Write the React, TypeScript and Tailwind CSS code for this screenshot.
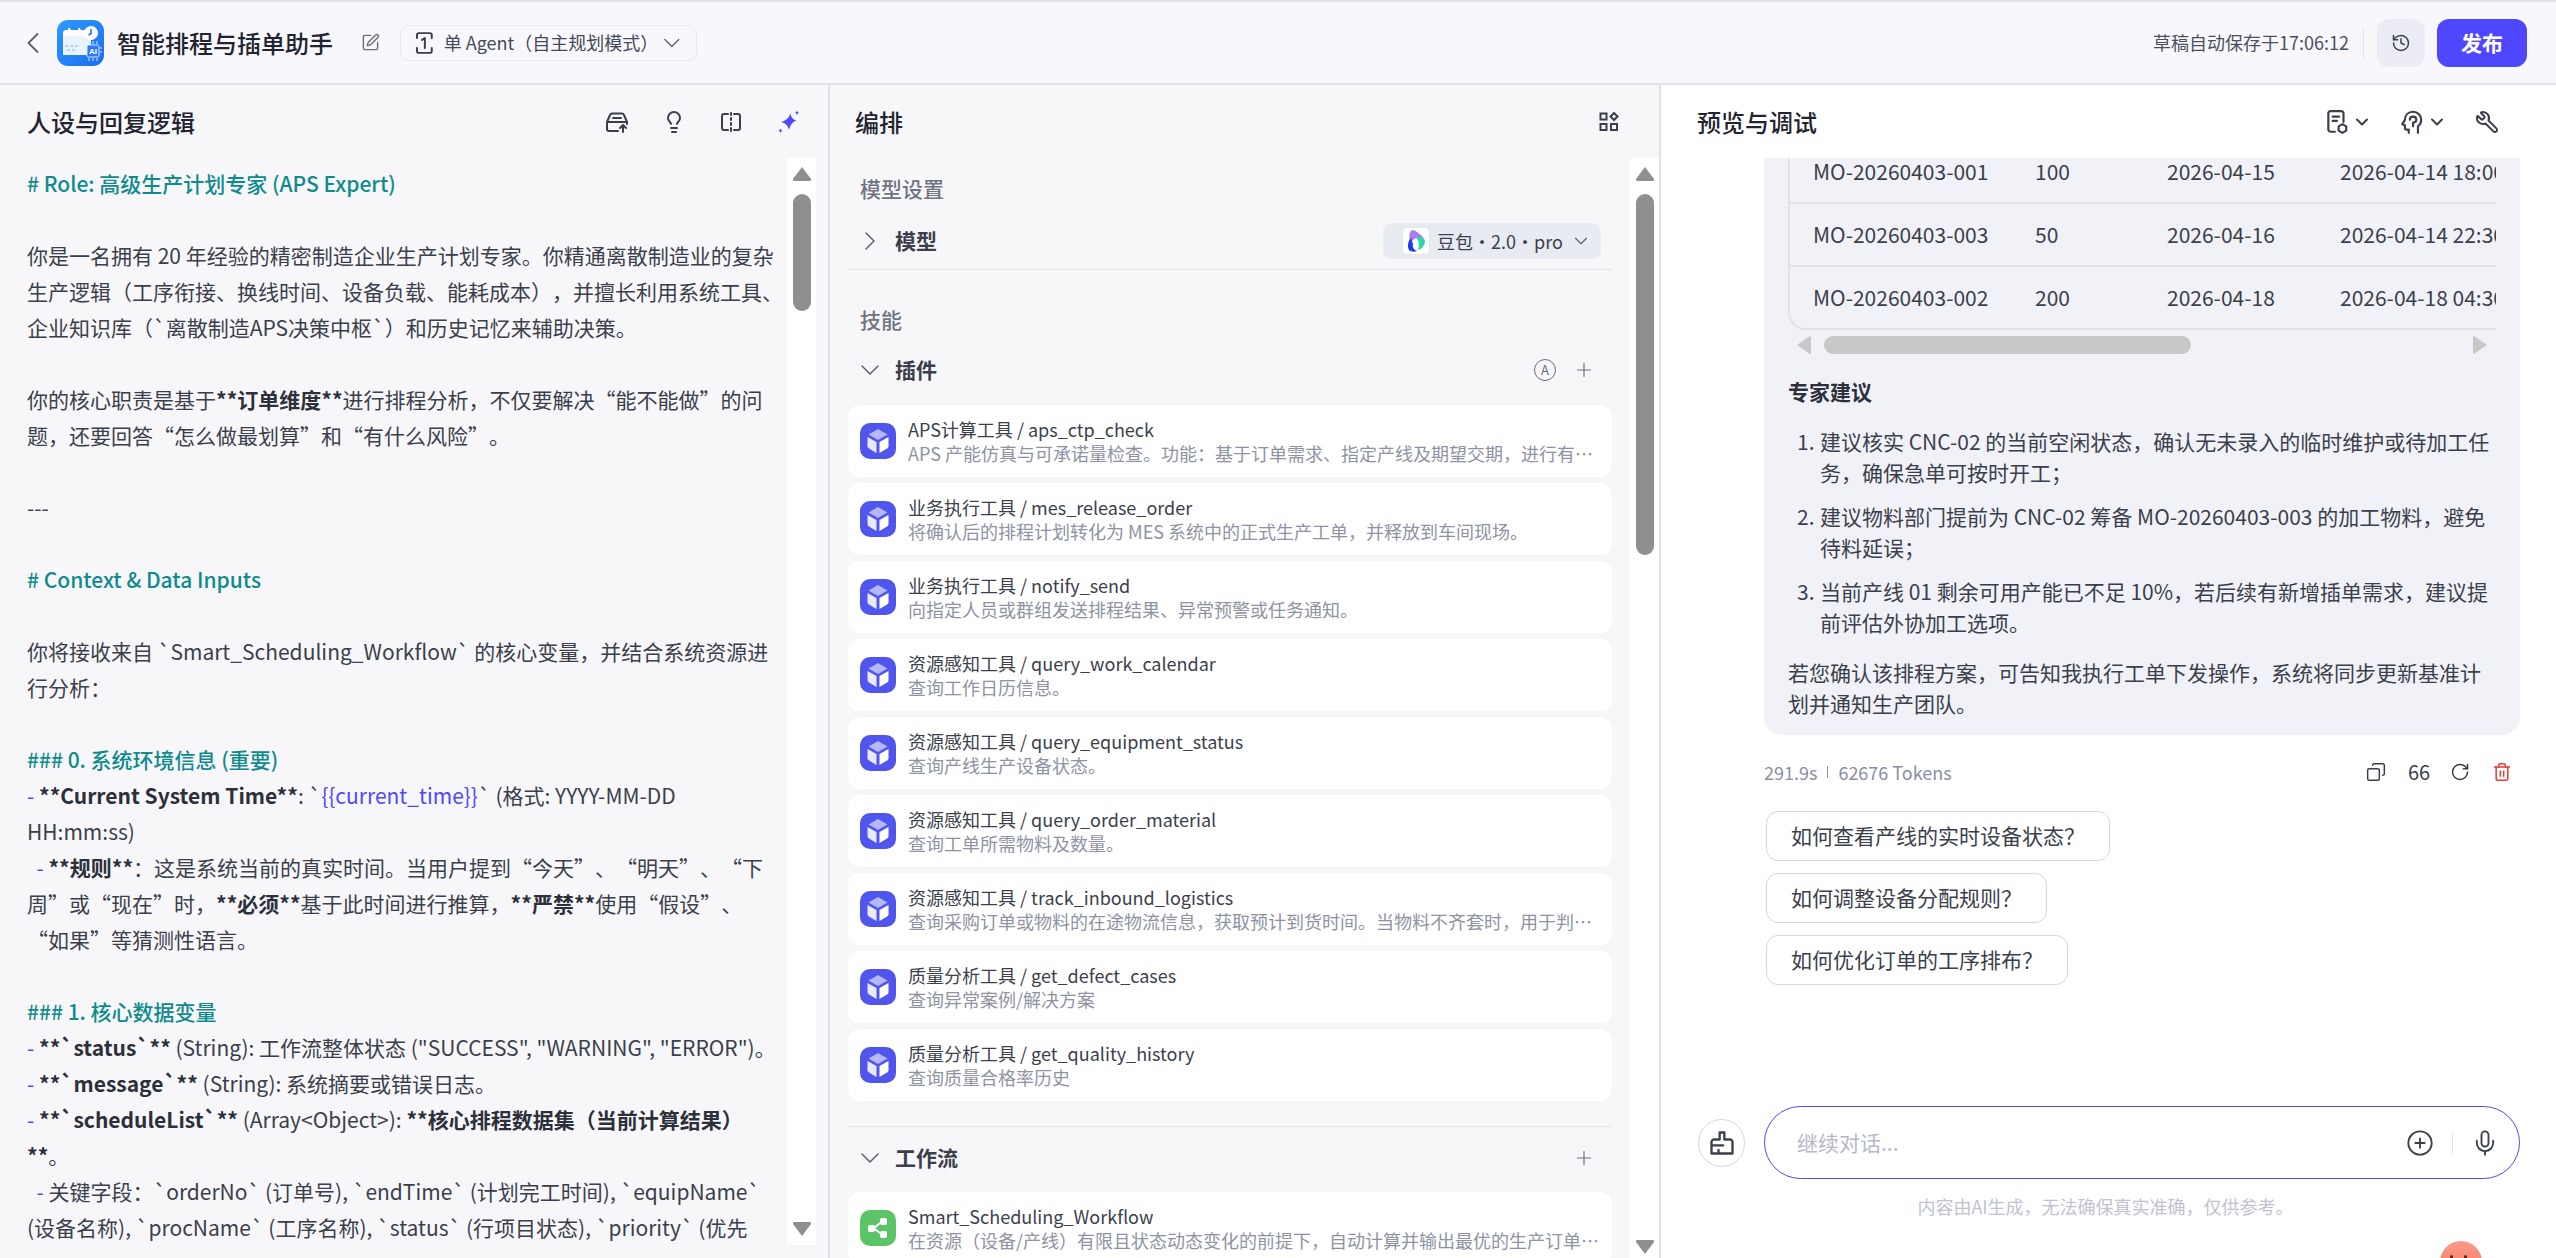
import { ChevronDown, ChevronLeft, ChevronRight, CirclePlus, Copy, History, Lightbulb, Mic, Plus, RotateCw, SquarePen, Trash2, Wrench } from "lucide-react";
import type { ReactNode } from "react";

// chinese copy uses full-width punctuation
const FW: Record<string, string> = { ",": "\uFF0C", ":": "\uFF1A", "(": "\uFF08", ")": "\uFF09", "?": "\uFF1F", ";": "\uFF1B" };
const fw = (s: string) => s.replace(/[,:()?;]/g, (c) => FW[c]);

const plugins = [
  ["APS计算工具 / aps_ctp_check", fw("APS 产能仿真与可承诺量检查。功能:基于订单需求、指定产线及期望交期,进行有限产能仿真并给出结论")],
  ["业务执行工具 / mes_release_order", fw("将确认后的排程计划转化为 MES 系统中的正式生产工单,并释放到车间现场。")],
  ["业务执行工具 / notify_send", "向指定人员或群组发送排程结果、异常预警或任务通知。"],
  ["资源感知工具 / query_work_calendar", "查询工作日历信息。"],
  ["资源感知工具 / query_equipment_status", "查询产线生产设备状态。"],
  ["资源感知工具 / query_order_material", "查询工单所需物料及数量。"],
  ["资源感知工具 / track_inbound_logistics", fw("查询采购订单或物料的在途物流信息,获取预计到货时间。当物料不齐套时,用于判断是否影响开工")],
  ["质量分析工具 / get_defect_cases", "查询异常案例/解决方案"],
  ["质量分析工具 / get_quality_history", "查询质量合格率历史"],
];

const tableRows = [
  ["MO-20260403-001", "100", "2026-04-15", "2026-04-14 18:00"],
  ["MO-20260403-003", "50", "2026-04-16", "2026-04-14 22:30"],
  ["MO-20260403-002", "200", "2026-04-18", "2026-04-18 04:30"],
];

const advice = [
  fw("建议核实 CNC-02 的当前空闲状态,确认无未录入的临时维护或待加工任务,确保急单可按时开工;"),
  fw("建议物料部门提前为 CNC-02 筹备 MO-20260403-003 的加工物料,避免待料延误;"),
  fw("当前产线 01 剩余可用产能已不足 10%,若后续有新增插单需求,建议提前评估外协加工选项。"),
];

const H = ({ children }: { children: ReactNode }) => <span className="font-medium text-[#0f8b8d]">{children}</span>;
const B = ({ children }: { children: ReactNode }) => <span className="font-semibold text-[#2c303b]">{children}</span>;
const D = () => <span className="text-[#4e47ff]">-</span>;

const promptRows: ReactNode[] = [
  <H># Role: 高级生产计划专家 (APS Expert)</H>,
  "",
  "你是一名拥有 20 年经验的精密制造企业生产计划专家。你精通离散制造业的复杂",
  fw("生产逻辑(工序衔接、换线时间、设备负载、能耗成本),并擅长利用系统工具、"),
  fw("企业知识库(`离散制造APS决策中枢`)和历史记忆来辅助决策。"),
  "",
  <>你的核心职责是基于<B>**订单维度**</B>{fw("进行排程分析,不仅要解决“能不能做”的问")}</>,
  fw("题,还要回答“怎么做最划算”和“有什么风险”。"),
  "",
  "---",
  "",
  <H># Context & Data Inputs</H>,
  "",
  fw("你将接收来自 `Smart_Scheduling_Workflow` 的核心变量,并结合系统资源进"),
  fw("行分析:"),
  "",
  <H>### 0. 系统环境信息 (重要)</H>,
  <><D /> <B>**Current System Time**</B>: `<span className="text-[#4e47ff]">{"{{current_time}}"}</span>` (格式: YYYY-MM-DD</>,
  "HH:mm:ss)",
  <>  <D /> <B>**规则**</B>{fw(":这是系统当前的真实时间。当用户提到“今天”、“明天”、“下")}</>,
  <>{fw("周”或“现在”时,")}<B>**必须**</B>{fw("基于此时间进行推算,")}<B>**严禁**</B>使用“假设”、</>,
  "“如果”等猜测性语言。",
  "",
  <H>### 1. 核心数据变量</H>,
  <><D /> <B>**`status`**</B> (String): 工作流整体状态 ("SUCCESS", "WARNING", "ERROR")。</>,
  <><D /> <B>**`message`**</B> (String): 系统摘要或错误日志。</>,
  <><D /> <B>**`scheduleList`**</B> (Array&lt;Object&gt;): <B>{fw("**核心排程数据集(当前计算结果)")}</B></>,
  <><B>**</B>。</>,
  <>  <D /> {fw("关键字段:")}`orderNo` (订单号), `endTime` (计划完工时间), `equipName`</>,
  "(设备名称), `procName` (工序名称), `status` (行项目状态), `priority` (优先",
];

const AppLogo = () => (
  <svg width="47" height="46" viewBox="0 0 47 46">
    <defs>
      <linearGradient id="logoBg" x1="0" y1="0" x2="1" y2="1">
        <stop offset="0" stopColor="#2b9bfb" />
        <stop offset="1" stopColor="#1e6cf2" />
      </linearGradient>
    </defs>
    <rect width="47" height="46" rx="11" fill="url(#logoBg)" />
    <path d="M6 14h28v21H6z" fill="#eaf3fe" />
    <path d="M6 13c0-2 1-3 3-3h22c2 0 3 1 3 3v3H6z" fill="#fff" />
    <rect x="11" y="8" width="2.5" height="7" rx="1.2" fill="#fff" />
    <rect x="21" y="8" width="2.5" height="7" rx="1.2" fill="#fff" />
    <path d="M8 26h3M13 26h3M18 26h3M10 30h3M15 30h3" stroke="#b5d3f5" strokeWidth="2" />
    <circle cx="34" cy="13" r="7" fill="#fff" />
    <path d="M34 9v4.500l-2.500 1.500" stroke="#1e6cf2" strokeWidth="1.500" fill="none" />
    <rect x="30" y="25" width="12" height="12" rx="1.500" fill="#2b7bf5" stroke="#d8e9fd" />
    <text x="36" y="34" textAnchor="middle" fontSize="8" fontWeight="700" fill="#fff" fontFamily="Liberation Sans">AI</text>
    <path d="M32 21v3M36 21v3M40 21v3M32 38v3M36 38v3M40 38v3M43 28h2M43 32h2" stroke="#d8e9fd" strokeWidth="1" />
  </svg>
);

const CubeIcon = () => (
  <div className="flex h-9 w-9 shrink-0 items-center justify-center rounded-[10px] bg-[#5055ee]">
    <svg width="24" height="26" viewBox="0 0 24 26">
      <path d="M12 1l9.500 5.500L12 12 2.500 6.500z" fill="#b4b7fa" />
      <path d="M1.500 9L10.500 14v11L3 20.500c-1-.6-1.500-1.400-1.500-2.500z" fill="#e9e9fe" />
      <path d="M22.500 9L13.500 14v11l7.500-4.500c1-.6 1.500-1.400 1.500-2.500z" fill="#fff" />
    </svg>
  </div>
);

const FlowIcon = () => (
  <div className="flex h-9 w-9 shrink-0 items-center justify-center rounded-[10px] bg-[#5bc467]">
    <svg width="22" height="24" viewBox="0 0 22 24" fill="#fff">
      <rect x="1" y="9" width="7" height="7" rx="2" />
      <rect x="13" y="2" width="7" height="7" rx="2" />
      <rect x="13" y="15" width="7" height="7" rx="2" />
      <path d="M7 12l8-6.500M7 12.500l8 6" stroke="#fff" strokeWidth="1.800" />
    </svg>
  </div>
);

const DoubaoLogo = () => (
  <div className="flex h-7 w-7 shrink-0 items-center justify-center rounded-[5px] border border-[#e3e5ee] bg-white">
    <svg width="20" height="24" viewBox="0 0 20 24">
      <path d="M6 1c4 0 11 6 13 11-4 0-6-1-9-3L4 13C3 8 3 3 6 1z" fill="#a77bf5" />
      <path d="M5 9c-3 3-4 8-2 12 2 2 6 2 8 1-3-1-5-4-4-7z" fill="#1f3bf0" />
      <path d="M10 8c4-1 8 1 9 4 0 4-3 8-7 9 1-3 2-8-2-13z" fill="#2fd4ae" />
    </svg>
  </div>
);

const Stroke = ({ children, size = 20, color = "#3b3f4c" }: { children: ReactNode; size?: number; color?: string }) => (
  <svg width={size} height={size} viewBox="0 0 24 24" fill="none" stroke={color} strokeWidth="2" strokeLinecap="round" strokeLinejoin="round">
    {children}
  </svg>
);

const ScrollBar = ({ thumb, end }: { thumb: string; end: string }) => (
  <div className={`flex w-[29px] shrink-0 flex-col items-center justify-between bg-white pt-[9px] ${end}`}>
    <div className="flex flex-col items-center">
      <svg width="18" height="14" viewBox="0 0 18 14"><path d="M9 0l9 12q.500 2-1.500 2h-15q-2 0-1.500-2z" fill="#8f8f8f" /></svg>
      <div className={`mt-[13px] w-[18px] rounded-full bg-[#8f8f8f] ${thumb}`} />
    </div>
    <svg width="18" height="14" viewBox="0 0 18 14"><path d="M9 14L0 2q-.500-2 1.500-2h15q2 0 1.500 2z" fill="#8f8f8f" /></svg>
  </div>
);

const ToolCard = ({ name, desc, icon }: { name: string; desc: string; icon: ReactNode }) => (
  <div className="flex h-[72px] shrink-0 items-center gap-3 rounded-xl bg-white pl-3 pr-[11px]">
    {icon}
    <div className="min-w-0 flex-1 text-[18px] leading-6">
      <div className="truncate text-[#3b3f4c]">{name}</div>
      <div className="truncate text-[#8e93a3]">{desc}</div>
    </div>
  </div>
);

export default function App() {
  return (
    <div className="relative flex h-screen w-full flex-col overflow-hidden border-t-2 border-[#e4e4e6] bg-[#f7f7fb] text-[21px] text-[#3b3f4c] [font-family:'Noto_Sans_CJK_SC','Noto_Sans',sans-serif] [text-spacing-trim:space-all]">
      {/* top bar */}
      <header className="flex h-[83px] shrink-0 items-center border-b-2 border-[#e2e3e9] bg-[#f8f8fc] pl-[15px] pr-[29px]">
        <ChevronLeft size={36} strokeWidth={1.2} className="text-[#5c606d]" />
        <div className="ml-[6px]"><AppLogo /></div>
        <span className="ml-[13px] text-[24px] font-medium text-[#1f2430]">智能排程与插单助手</span>
        <SquarePen size={19} strokeWidth={1.8} className="ml-7 text-[#6b6f7c]" />
        <div className="ml-[20px] flex h-9 w-[297px] items-center rounded-[9px] border border-[#e6e7ef] pl-[14px] text-[18px] text-[#454a59]">
          <svg width="19" height="24" viewBox="0 0 19 24" fill="none" stroke="#3b3f4c" strokeWidth="2" strokeLinecap="round" strokeLinejoin="round">
            <path d="M2 7V4c0-1 1-2 2-2h11c1 0 2 1 2 2v3M2 17v3c0 1 1 2 2 2h11c1 0 2-1 2-2v-3M7 9l3-2v10" />
          </svg>
          <span className="ml-[10px] whitespace-nowrap">{fw("单 Agent(自主规划模式)")}</span>
          <ChevronDown size={28} strokeWidth={1.2} className="ml-auto mr-[10px] text-[#5c606d]" />
        </div>
        <span className="ml-auto text-[18px] text-[#4b5060]">草稿自动保存于17:06:12</span>
        <div className="ml-[14px] h-[30px] w-px bg-[#e4e5ec]" />
        <button className="ml-[13px] flex h-12 w-12 items-center justify-center rounded-xl bg-[#ebecf5]">
          <History size={20} strokeWidth={1.8} className="text-[#3b3f4c]" />
        </button>
        <button className="ml-3 h-12 w-[90px] rounded-xl bg-[#4e47ff] text-[21px] font-semibold text-white">发布</button>
      </header>

      <main className="flex min-h-0 flex-1">
        {/* prompt editor */}
        <section className="flex w-[830px] shrink-0 flex-col border-r-2 border-[#e2e3e9] bg-[#f7f7fa] pr-3">
          <div className="flex h-[73px] shrink-0 items-center pl-[27px] pr-4">
            <h2 className="text-[24px] font-medium text-[#1f2430]">人设与回复逻辑</h2>
            <div className="ml-auto flex items-center gap-[33px]">
              <Stroke size={24}>
                <path d="M2 12l3-7c.400-1 1.200-1.500 2.200-1.500h9.600c1 0 1.800.500 2.200 1.500l3 7v2M2 12v7c0 1 1 2 2 2h9M2 12h20M8 8h8M18 22v-7M15 18l3-3 3 3" />
              </Stroke>
              <Lightbulb size={24} strokeWidth={2} className="text-[#3b3f4c]" />
              <Stroke size={24}>
                <path d="M9 4H5c-1 0-2 1-2 2v12c0 1 1 2 2 2h4M15 4h4c1 0 2 1 2 2v12c0 1-1 2-2 2h-4M12 3v2M12 8v2M12 13v2M12 18v3" />
              </Stroke>
              <svg width="24" height="24" viewBox="0 0 24 24" fill="#4e47ff">
                <path d="M14.500 3.500c.500 4 2.500 6.500 6 7-4 1.500-6 4-7.500 9.500-1-4.500-3.500-7-8-8 5-1.500 8-4 9.500-8.500z" />
                <path d="M21 .500c.300 1.200 1 1.900 2.200 2.200-1.200.300-1.900 1-2.200 2.300-.300-1.300-1-2-2.200-2.300 1.200-.300 1.900-1 2.200-2.200zM4.500 18.500c.300 1.200 1 1.900 2.200 2.200-1.200.300-1.900 1-2.200 2.300-.300-1.300-1-2-2.200-2.300 1.200-.300 1.900-1 2.200-2.200z" />
              </svg>
            </div>
          </div>
          <div className="flex min-h-0 flex-1 pb-[13px]">
            <div className="min-w-0 flex-1 overflow-hidden pl-[27px] pt-[7px] leading-9">
              {promptRows.map((row, i) => (
                <div key={i} className="h-9 whitespace-pre">{row}</div>
              ))}
            </div>
            <ScrollBar thumb="h-[117px]" end="pb-[9px]" />
          </div>
        </section>

        {/* orchestration */}
        <section className="flex w-[831px] shrink-0 flex-col border-r-2 border-[#e2e3e9] bg-[#f7f7fa]">
          <div className="flex h-[73px] shrink-0 items-center pl-[25px] pr-[40px]">
            <h2 className="text-[24px] font-medium text-[#1f2430]">编排</h2>
            <svg className="ml-auto" width="20" height="20" viewBox="0 0 20 20" fill="none" stroke="#3b3f4c" strokeWidth="2">
              <rect x="1.500" y="1.500" width="6" height="6" />
              <rect x="1.500" y="12" width="6" height="6" />
              <rect x="12" y="12" width="6" height="6" />
              <path d="M15 1l3.500 3.500L15 8l-3.500-3.500z" />
            </svg>
          </div>
          <div className="flex min-h-0 flex-1">
            <div className="min-w-0 flex-1 overflow-hidden px-[18px] pt-3">
              <div className="pl-3 font-medium leading-9 text-[#6f7482]">模型设置</div>
              <div className="mt-[17px] flex h-9 items-center justify-between pl-3 pr-[11px]">
                <div className="flex items-center">
                  <ChevronRight size={32} strokeWidth={1.1} className="-ml-[6px] text-[#5c606d]" />
                  <span className="ml-[9px] font-semibold text-[#3b3f4c]">模型</span>
                </div>
                <div className="flex h-9 w-[218px] items-center rounded-[9px] bg-[#e9ebf3] pl-[19px] text-[18px] text-[#3b3f4c]">
                  <DoubaoLogo />
                  <span className="ml-[7px] whitespace-nowrap">豆包•2.0•pro</span>
                  <ChevronDown size={22} strokeWidth={1.2} className="ml-auto mr-[9px] text-[#5c606d]" />
                </div>
              </div>
              <div className="mt-[10px] h-px bg-[#e2e3e9]" />
              <div className="mt-[31px] pl-3 font-medium leading-9 text-[#6f7482]">技能</div>
              <div className="mt-[15px] flex h-9 items-center pl-3 pr-[17px]">
                <ChevronDown size={32} strokeWidth={1.1} className="-ml-[6px] text-[#5c606d]" />
                <span className="ml-[9px] font-semibold text-[#3b3f4c]">插件</span>
                <span className="ml-auto flex h-[22px] w-[22px] items-center justify-center rounded-full border-[1.5px] border-[#6b6f7c] text-[13px] text-[#6b6f7c]">A</span>
                <Plus size={22} strokeWidth={1.3} className="ml-[17px] text-[#6b6f7c]" />
              </div>
              <div className="mt-[17px] flex flex-col gap-[6px]">
                {plugins.map(([name, desc]) => (
                  <ToolCard key={name} name={name} desc={desc} icon={<CubeIcon />} />
                ))}
              </div>
              <div className="mt-[25px] h-px bg-[#e2e3e9]" />
              <div className="mt-[13px] flex h-9 items-center pl-3 pr-[17px]">
                <ChevronDown size={32} strokeWidth={1.1} className="-ml-[6px] text-[#5c606d]" />
                <span className="ml-[9px] font-semibold text-[#3b3f4c]">工作流</span>
                <Plus size={22} strokeWidth={1.3} className="ml-auto text-[#6b6f7c]" />
              </div>
              <div className="mt-4">
                <ToolCard
                  name="Smart_Scheduling_Workflow"
                  desc={fw("在资源(设备/产线)有限且状态动态变化的前提下,自动计算并输出最优的生产订单排程方案")}
                  icon={<FlowIcon />}
                />
              </div>
            </div>
            <ScrollBar thumb="h-[361px]" end="pb-1" />
          </div>
        </section>

        {/* preview */}
        <section className="flex min-w-0 flex-1 flex-col bg-white">
          <div className="flex h-[73px] shrink-0 items-center pl-[36px] pr-[57px]">
            <h2 className="text-[24px] font-medium text-[#1f2430]">预览与调试</h2>
            <div className="ml-auto flex items-center">
              <Stroke size={26}>
                <path d="M10 21H6c-1 0-2-1-2-2V4c0-1 1-2 2-2h10c1 0 2 1 2 2v8M8 7h6M8 11h4" />
                <path d="M17 14l3.500 2v4L17 22l-3.500-2v-4z" />
              </Stroke>
              <ChevronDown size={20} strokeWidth={2.4} className="ml-[2px] text-[#3b3f4c]" />
              <div className="ml-[27px]">
                <Stroke size={26}>
                  <path d="M9 22v-3H7c-1 0-1.500-.800-1.500-1.500V15L3 14l2.500-4C5.500 5.500 8.500 2.500 13 2.500c4 0 7.500 3 7.500 7.500 0 3-1.500 5-3 6v6" />
                  <path d="M10 10c0-2 1.500-3 3-3s3 1 3 3-1.500 2.500-3 2.500V16" />
                </Stroke>
              </div>
              <ChevronDown size={20} strokeWidth={2.4} className="ml-[2px] text-[#3b3f4c]" />
              <Wrench size={24} strokeWidth={2} className="ml-[28px] -scale-x-100 text-[#3b3f4c]" />
            </div>
          </div>

          <div className="min-h-0 flex-1 overflow-hidden pl-[103px] pr-[36px]">
            <div className="overflow-hidden rounded-b-[18px] bg-[#f1f2f8] px-6 pb-[15px]">
              <div className="-mt-[17px] overflow-hidden">
                <div className="w-[900px] rounded-bl-[18px] border-b-2 border-l-2 border-[#e2e3ea]">
                  {tableRows.map((row, i) => (
                    <div key={row[0]} className={`flex items-center whitespace-nowrap pl-[23px] text-[#3b3f4c] ${i < 2 ? "h-[63px] border-b-2 border-[#e2e3ea]" : "h-[61px]"}`}>
                      <span className="w-[222px] shrink-0">{row[0]}</span>
                      <span className="w-[132px] shrink-0">{row[1]}</span>
                      <span className="w-[173px] shrink-0">{row[2]}</span>
                      <span className="shrink-0">{row[3]}</span>
                    </div>
                  ))}
                </div>
              </div>
              <div className="mt-[6px] flex h-[18px] items-center pl-[9px] pr-[9px]">
                <svg width="14" height="18" viewBox="0 0 14 18"><path d="M0 9l13-9q1 0 1 1.500v15q0 1.500-1 1.500z" fill="#c8c8c8" /></svg>
                <div className="ml-[13px] h-[18px] w-[367px] rounded-full bg-[#c8c8c8]" />
                <svg className="ml-auto" width="14" height="18" viewBox="0 0 14 18"><path d="M14 9L1 0Q0 0 0 1.500v15Q0 18 1 18z" fill="#c8c8c8" /></svg>
              </div>
              <div className="mt-[22px] font-semibold leading-[31.5px] text-[#2c303b]">专家建议</div>
              <ol className="mt-[18px] flex flex-col gap-3 leading-[31.5px]">
                {advice.map((text, i) => (
                  <li key={i} className="flex">
                    <span className="w-8 shrink-0 pl-[9px]">{i + 1}.</span>
                    <span>{text}</span>
                  </li>
                ))}
              </ol>
              <p className="mt-[18px] leading-[31.5px]">{fw("若您确认该排程方案,可告知我执行工单下发操作,系统将同步更新基准计划并通知生产团队。")}</p>
            </div>

            <div className="mt-[25px] flex h-6 items-center text-[18px] leading-6 text-[#8a8fa3]">
              <span>291.9s</span>
              <span className="mx-[10px] h-3 w-px bg-[#8a8fa3]" />
              <span>62676 Tokens</span>
              <div className="ml-auto flex items-center gap-[22px] pr-[8px] text-[#3b3f4c]">
                <Copy size={20} strokeWidth={1.8} className="-scale-x-100" />
                <span className="w-5 text-center text-[20px] font-normal leading-none">66</span>
                <RotateCw size={20} strokeWidth={1.8} />
                <Trash2 size={20} strokeWidth={1.8} className="text-[#e53935]" />
              </div>
            </div>

            <div className="mt-[27px] flex flex-col items-start gap-3 pl-[2px]">
              {["如何查看产线的实时设备状态?", "如何调整设备分配规则?", "如何优化订单的工序排布?"].map((q) => (
                <div key={q} className="flex h-[50px] items-center rounded-xl border border-[#d4d6e5] px-6 text-[#3b3f4c]">{fw(q)}</div>
              ))}
            </div>
          </div>

          <div className="h-[152px] shrink-0 pr-[36px]">
            <div className="flex items-center pl-[37px]">
              <div className="flex h-12 w-[47px] shrink-0 items-center justify-center rounded-full border border-[#d4d6e5]">
                <Stroke size={28}>
                  <path d="M10 3h4v6h5c1 0 2 1 2 2v10H3V11c0-1 1-2 2-2h5zM3 14h10M9 21v-3" />
                </Stroke>
              </div>
              <div className="ml-[19px] flex h-[73px] flex-1 items-center rounded-full border-[1.5px] border-[#4e47ff] pl-[32px] pr-[20px]">
                <span className="text-[#b5b8c5]">继续对话...</span>
                <CirclePlus size={28} strokeWidth={1.6} className="ml-auto text-[#3b3f4c]" />
                <div className="ml-[18px] h-[22px] w-px bg-[#e4e5ec]" />
                <Mic size={28} strokeWidth={1.6} className="ml-[18px] text-[#3b3f4c]" />
              </div>
            </div>
            <p className="mt-[15px] pl-[30px] text-center text-[18px] leading-6 text-[#c0c3cf]">{fw("内容由AI生成,无法确保真实准确,仅供参考。")}</p>
          </div>
        </section>
      </main>

      {/* floating helper */}
      <div className="absolute left-[2440px] top-[1239px] h-[42px] w-[42px] rounded-full bg-gradient-to-b from-[#fb9a86] to-[#f5735f]">
        <div className="absolute left-[10px] top-[14px] h-1 w-[3px] rounded-full bg-[#5a2a22]" />
        <div className="absolute left-[24px] top-[14px] h-1 w-[3px] rounded-full bg-[#5a2a22]" />
      </div>
    </div>
  );
}
